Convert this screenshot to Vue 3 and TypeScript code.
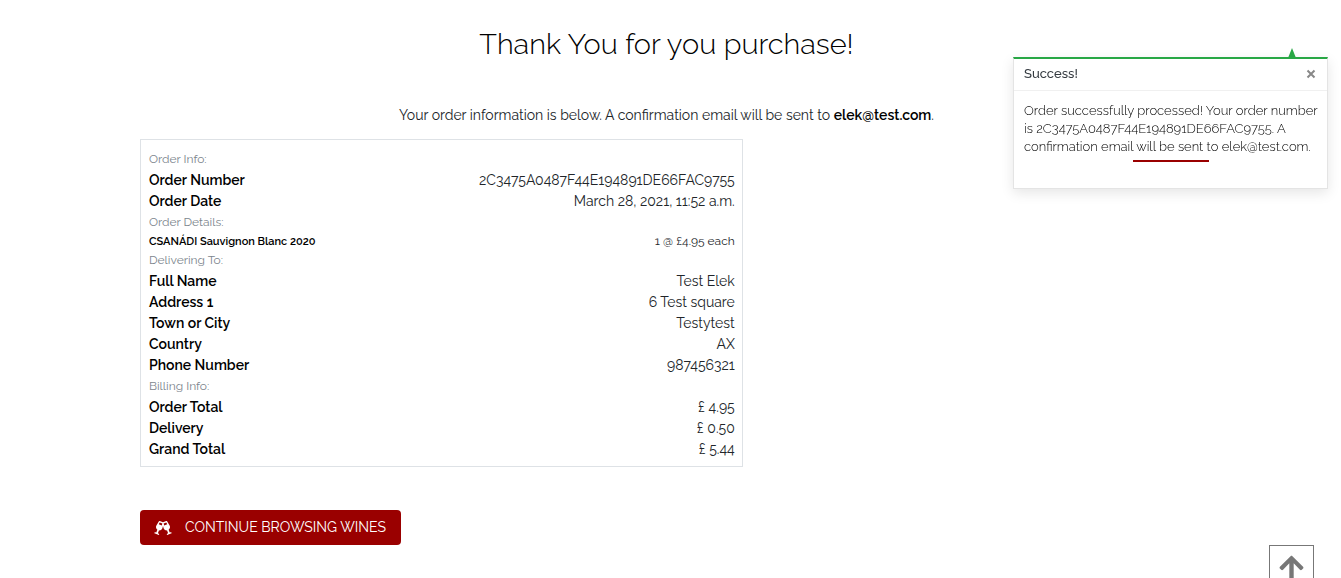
<script setup lang="ts">
import { ref } from 'vue'

interface Row {
  label: string
  value: string
  item?: boolean
}

interface Section {
  title: string
  rows: Row[]
}

const email = 'elek@test.com'
const orderNumber = '2C3475A0487F44E194891DE66FAC9755'
const toastOpen = ref(true)

const sections: Section[] = [
  {
    title: 'Order Info:',
    rows: [
      { label: 'Order Number', value: orderNumber },
      { label: 'Order Date', value: 'March 28, 2021, 11:52 a.m.' },
    ],
  },
  {
    title: 'Order Details:',
    rows: [{ label: 'CSANÁDI Sauvignon Blanc 2020', value: '1 @ £4.95 each', item: true }],
  },
  {
    title: 'Delivering To:',
    rows: [
      { label: 'Full Name', value: 'Test Elek' },
      { label: 'Address 1', value: '6 Test square' },
      { label: 'Town or City', value: 'Testytest' },
      { label: 'Country', value: 'AX' },
      { label: 'Phone Number', value: '987456321' },
    ],
  },
  {
    title: 'Billing Info:',
    rows: [
      { label: 'Order Total', value: '£ 4.95' },
      { label: 'Delivery', value: '£ 0.50' },
      { label: 'Grand Total', value: '£ 5.44' },
    ],
  },
]

function toTop() {
  window.scrollTo({ top: 0, behavior: 'smooth' })
}
</script>

<template>
  <div class="page">
    <main class="container">
      <h1 class="title">Thank You for you purchase!</h1>
      <p class="lead">
        Your order information is below. A confirmation email will be sent to <strong>{{ email }}</strong>.
      </p>

      <table class="order">
        <tbody v-for="section in sections" :key="section.title">
          <tr>
            <th class="section" colspan="2" scope="rowgroup">{{ section.title }}</th>
          </tr>
          <tr v-for="row in section.rows" :key="row.label" :class="{ item: row.item }">
            <th class="label" scope="row">{{ row.label }}</th>
            <td class="value">{{ row.value }}</td>
          </tr>
        </tbody>
      </table>

      <a class="button" href="#">
        <svg class="cheers" viewBox="0 0 640 512" aria-hidden="true">
          <path
            fill="currentColor"
            d="M639.4 433.6c-8.4-20.4-31.8-30.1-52.2-21.6l-22.1 9.2-38.7-101.9c47.9-35 64.8-100.3 34.5-152.8L474.3 16c-8-13.9-25.1-19.7-40-13.6L320 49.8 205.7 2.4c-14.9-6.2-32-.3-40 13.6L79.1 166.5C48.9 219 65.7 284.3 113.6 319.2L74.9 421.1l-22.1-9.2c-20.4-8.5-43.7 1.2-52.2 21.6-1.7 4.1.2 8.8 4.3 10.5l162.3 67.4c4.1 1.7 8.7-.2 10.4-4.3 8.4-20.4-1.2-43.8-21.6-52.3l-22.1-9.2L173.3 342c4.4.5 8.8 1.3 13.1 1.3 51.7 0 99.4-33.1 113.4-85.3l20.2-75.4 20.2 75.4c14 52.2 61.7 85.3 113.4 85.3 4.3 0 8.7-.8 13.1-1.3L506 445.6l-22.1 9.2c-20.4 8.5-30 31.9-21.6 52.3 1.7 4.1 6.4 6 10.4 4.3L635 444.1c4.2-1.7 6.1-6.4 4.4-10.5zM275.9 162.1l-112.1-46.5 36.5-63.4 94.5 39.2-18.9 70.7zm88.2 0l-18.9-70.7 94.5-39.2 36.5 63.4-112.1 46.5z"
          />
        </svg>
        <span>CONTINUE BROWSING WINES</span>
      </a>
    </main>

    <div v-if="toastOpen" class="toast" role="status">
      <span class="caret"></span>
      <div class="toast-head">
        <strong>Success!</strong>
        <button class="close" type="button" aria-label="Close" @click="toastOpen = false">
          <svg viewBox="0 0 10 10" aria-hidden="true">
            <path d="M1.5 1.5l7 7M8.5 1.5l-7 7" fill="none" stroke="currentColor" stroke-width="2" />
          </svg>
        </button>
      </div>
      <div class="toast-body">
        <p>
          Order successfully processed! Your order number is {{ orderNumber }}. A confirmation email will be sent to
          {{ email }}.
        </p>
        <hr class="rule" />
      </div>
    </div>

    <button class="to-top" type="button" aria-label="Back to top" @click="toTop">
      <svg viewBox="0 0 448 512" aria-hidden="true">
        <path
          fill="currentColor"
          d="M34.9 289.5l-22.2-22.2c-9.4-9.4-9.4-24.6 0-33.9L207 39c9.4-9.4 24.6-9.4 33.9 0l194.3 194.3c9.4 9.4 9.4 24.6 0 33.9L413 289.4c-9.5 9.5-25 9.3-34.3-.4L264 168.6V456c0 13.3-10.7 24-24 24h-32c-13.3 0-24-10.7-24-24V168.6L69.2 289.1c-9.3 9.8-24.8 10-34.3.4z"
        />
      </svg>
    </button>
  </div>
</template>

<style>
body {
  margin: 0;
  background: #fff;
}
</style>

<style scoped>
.page {
  box-sizing: border-box;
  padding: 24px 8px 0 0;
  font-family: Raleway, Lato, 'Open Sans', sans-serif;
  font-size: 14px;
  line-height: 21px;
  color: #212529;
}

.container {
  width: 79%;
  margin: 0 auto;
}

.title {
  margin: 0;
  font-size: 29px;
  font-weight: 300;
  line-height: 40px;
  text-align: center;
  color: #000;
}

.lead {
  margin: 41px 0 13px;
  font-weight: 400;
  text-align: center;
}

.lead strong {
  font-weight: 600;
  color: #000;
}

.order {
  box-sizing: border-box;
  width: calc((100% + 30px) * 7 / 12 - 29px);
  padding: 9px 7px 6px 8px;
  border: 1px solid #dee2e6;
  border-spacing: 0;
}

.order th,
.order td {
  padding: 0;
  text-align: left;
}

.order .section {
  font-size: 12px;
  font-weight: 400;
  color: #7c858d;
}

.order .label {
  font-weight: 600;
  color: #000;
}

.order .value {
  font-weight: 400;
  text-align: right;
}

.order .item {
  line-height: 17px;
}

.order .item .label {
  font-size: 11px;
}

.order .item .value {
  font-size: 12px;
}

.order .item .label,
.order .item .value {
  vertical-align: middle;
}

.button {
  display: inline-flex;
  align-items: center;
  gap: 13px;
  box-sizing: border-box;
  margin-top: 43px;
  padding: 7px 15px 7px 14px;
  border-radius: 4px;
  background: #9a0000;
  color: #fff;
  text-decoration: none;
}

.cheers {
  width: 18px;
  height: 14px;
}

.toast {
  position: fixed;
  top: 57px;
  right: 13px;
  box-sizing: border-box;
  width: 315px;
  border: 1px solid rgba(0, 0, 0, 0.1);
  border-top: 2px solid #28a745;
  background: #fff;
  box-shadow: 0 4px 12px rgba(0, 0, 0, 0.1);
  font-size: 13px;
  line-height: 18px;
}

.caret {
  position: absolute;
  top: -11px;
  right: 31px;
  border: 4px solid transparent;
  border-top: 0;
  border-bottom: 10px solid #28a745;
}

.toast-head {
  display: flex;
  align-items: center;
  justify-content: space-between;
  padding: 6px 10px 7px;
  border-bottom: 1px solid #f0f0f0;
  color: #343a40;
}

.toast-head strong {
  font-weight: 500;
}

.close {
  display: flex;
  margin: 0;
  padding: 1px;
  border: 0;
  background: none;
  color: #888;
}

.close svg {
  width: 10px;
  height: 10px;
}

.toast-body {
  padding: 11px 0 26px;
  font-weight: 300;
  color: #000;
}

.toast-body p {
  margin: 0;
  padding: 0 6px 0 10px;
}

.rule {
  width: 76px;
  height: 2px;
  margin: 4px auto 0;
  border: 0;
  background: #9a0000;
}

.to-top {
  position: fixed;
  right: 27px;
  bottom: -12px;
  display: flex;
  align-items: center;
  justify-content: center;
  width: 45px;
  height: 45px;
  padding: 0;
  border: 1px solid #777;
  background: #fff;
  color: #777;
}

.to-top svg {
  width: 25px;
  height: 28px;
}
</style>
